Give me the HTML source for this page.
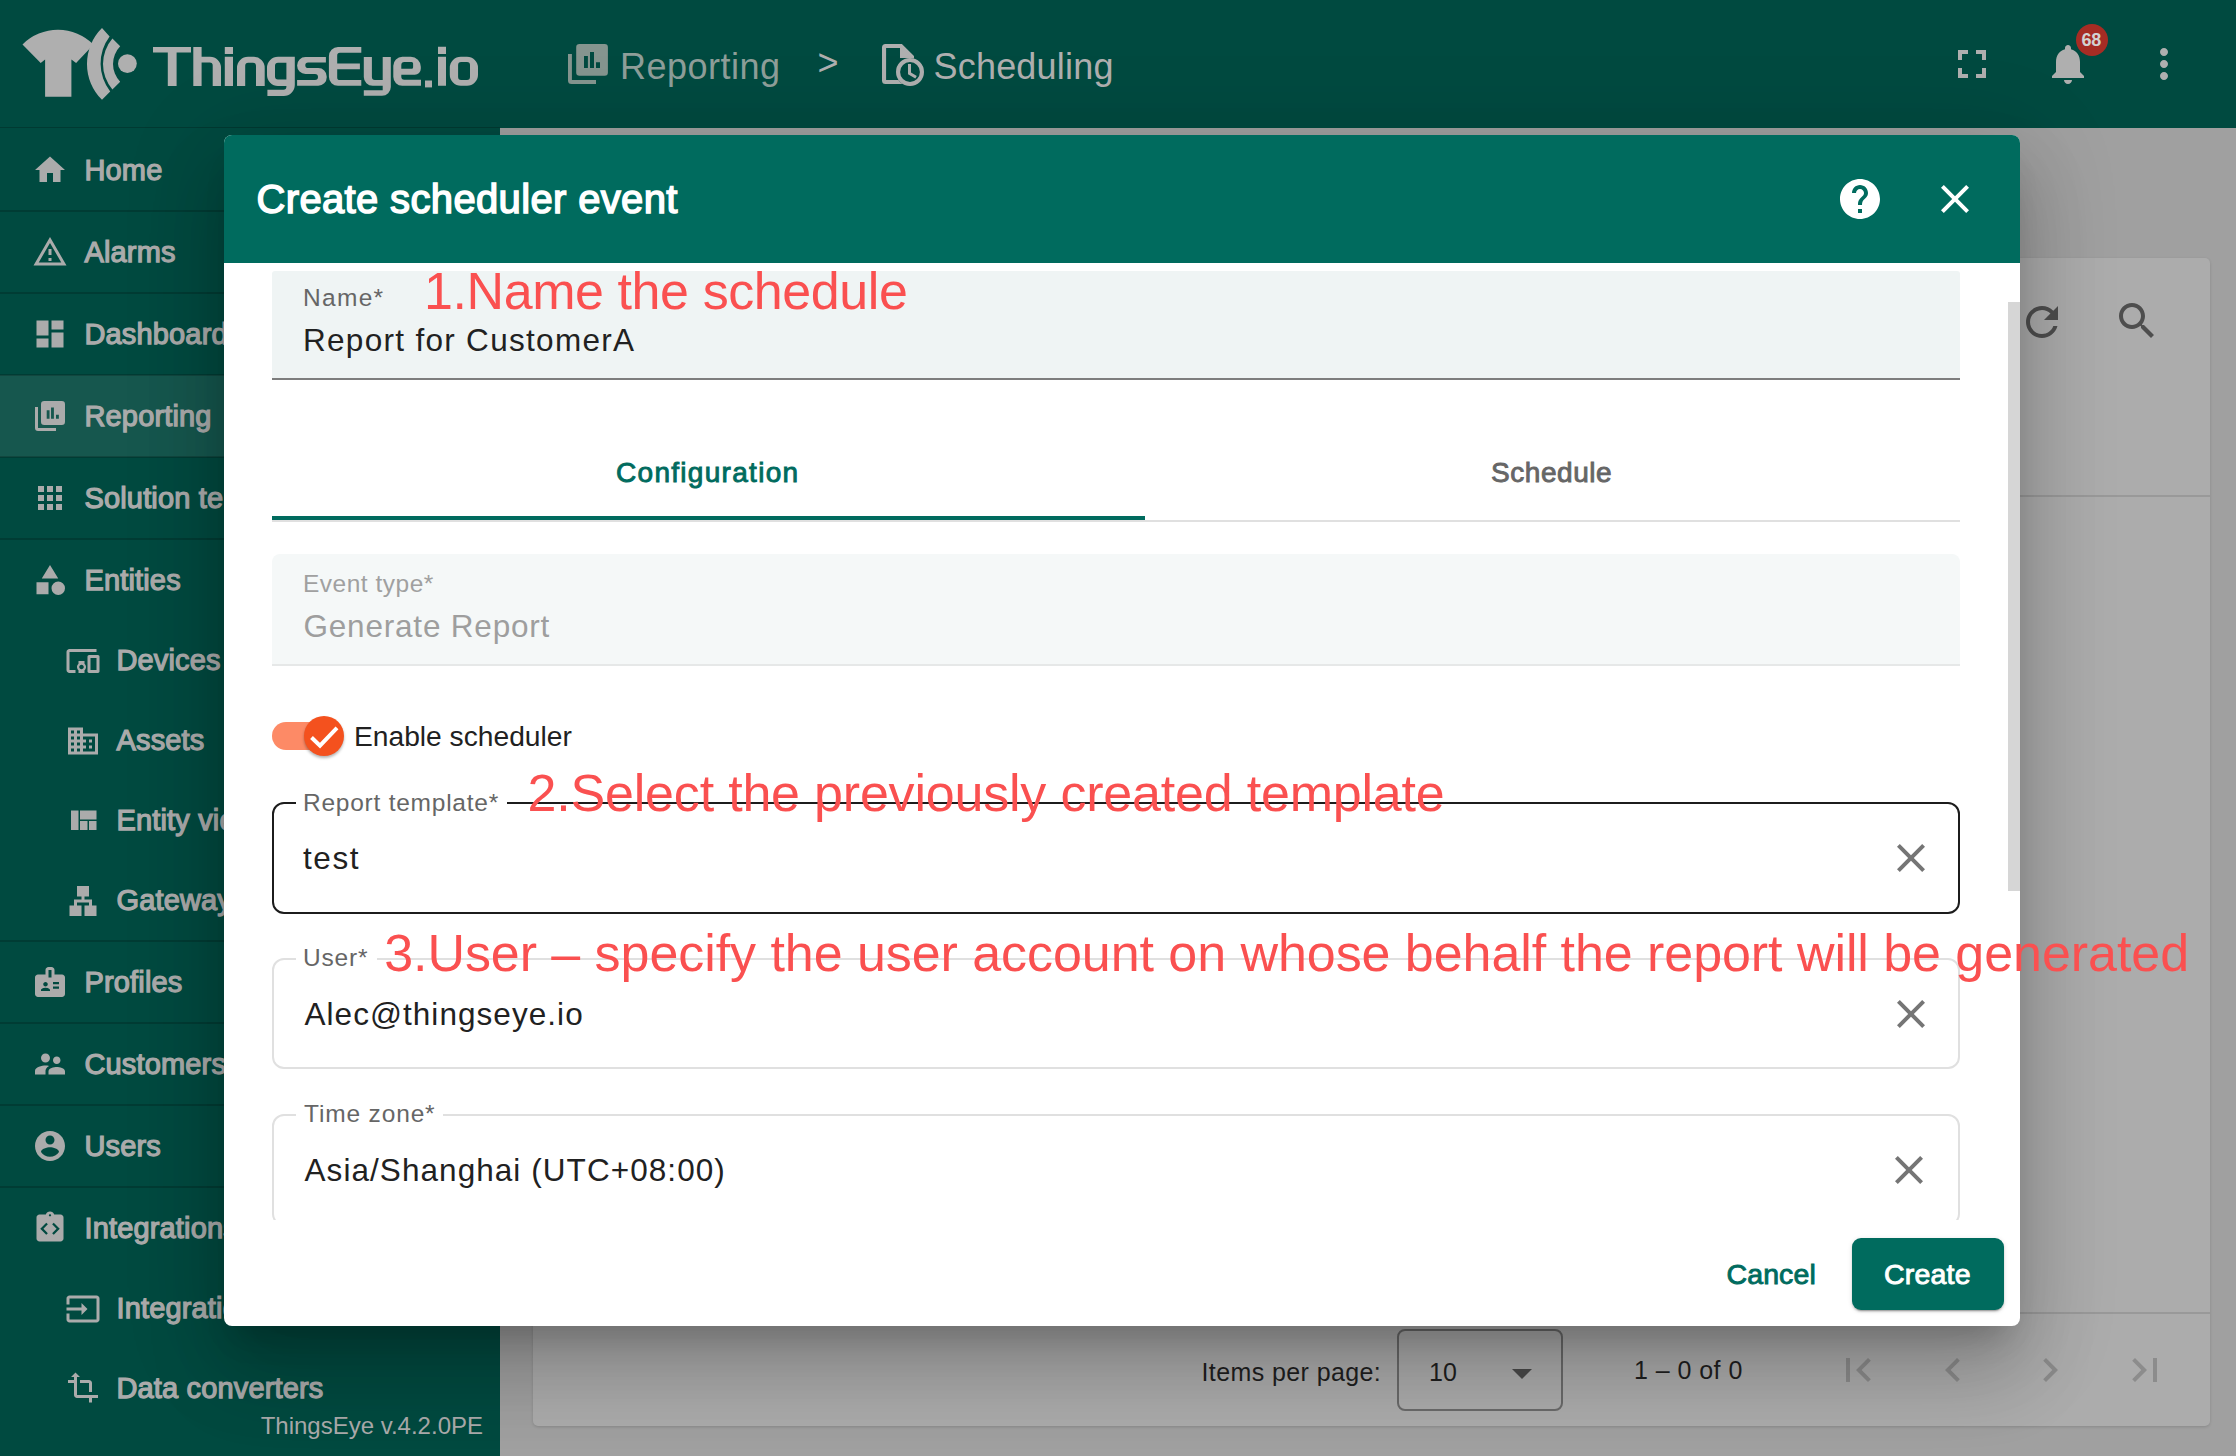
<!DOCTYPE html>
<html><head><meta charset="utf-8"><title>Create scheduler event</title>
<style>
html,body{margin:0;padding:0;}
body{width:2236px;height:1456px;overflow:hidden;position:relative;background:#a0a0a0;font-family:"Liberation Sans",sans-serif;}
.t{position:absolute;line-height:1;white-space:pre;font-family:"Liberation Sans",sans-serif;}
.abs{position:absolute;}
.m{-webkit-text-stroke:0.9px currentColor;}
.m2{-webkit-text-stroke:1.25px currentColor;}
.m3{-webkit-text-stroke:1.5px currentColor;}
</style></head><body>
<div class="abs" style="left:0;top:0;width:2236px;height:128px;background:#004a40;"></div>
<div class="abs" style="left:0;top:127px;width:500px;height:3px;background:#003a32;"></div>
<div class="abs" style="left:488px;top:130px;width:12px;height:5px;background:#66736f;"></div>
<svg class="abs" style="left:0;top:0" width="500" height="128" viewBox="0 0 500 128">
<g fill="#afafaf">
<path d="M22.5 44.4 A50.2 50.2 0 0 1 93.6 44.6 L76.1 62.9 L71.4 59.4 L71.4 96.7 L45.1 96.7 L45.1 59.4 L40.7 62.9 Z"/>
<path d="M102 28.1 A50.3 50.3 0 0 0 102 99.8 L110.2 91.4 A45.2 45.2 0 0 1 109.6 36.4 Z"/>
<path d="M112.4 38.5 A39.3 39.3 0 0 0 112.4 89.5 L120.2 81.7 A25.4 25.4 0 0 1 120.2 46.3 Z"/>
<circle cx="127.4" cy="63.6" r="9.4"/>
</g>
<g fill="#afafaf">
<path fill-rule="evenodd" d="M153 47h38v5.4h-14.4V86h-8.8V52.4H153z"/>
<path fill-rule="evenodd" d="M193.3 47h8.3v9.7h8.4a11 11 0 0 1 11 11V86h-8.3V65.5a3 3 0 0 0-3-3h-8.1V86h-8.3z"/>
<path fill-rule="evenodd" d="M224.8 47h8.2v7h-8.2z M224.8 56.7h8.2V86h-8.2z"/>
<path fill-rule="evenodd" d="M237 86V67.7a11 11 0 0 1 11-11h5.7a11 11 0 0 1 11 11V86h-8.7V65.7a3 3 0 0 0-3-3h-4.8a3 3 0 0 0-3 3V86z"/>
<path fill-rule="evenodd" d="M278 56.7h16.8V86v-0 0V84.9a11 11 0 0 1-11 11H267.4v-6.1h16a3 3 0 0 0 3-3V86h-8.4a11 11 0 0 1-11-11V67.7a11 11 0 0 1 11-11z M278 62.7a3 3 0 0 0-3 3v10.8a3 3 0 0 0 3 3h8.4V62.7z"/>
<path fill-rule="evenodd" d="M305.5 57H325.9V62.4H308.1a2.8 2.8 0 0 0-2.8 2.8a2.8 2.8 0 0 0 2.8 2.8H318.3a8.4 8.4 0 0 1 8.4 8.4v1a8.4 8.4 0 0 1-8.4 8.4H297.1V80H315a3 3 0 0 0 3-3a3 3 0 0 0-3-3H305.5a8.4 8.5 0 0 1-8.4-8.5a8.4 8.5 0 0 1 8.4-8.5z"/>
<path fill-rule="evenodd" d="M338 47.1h23.3v5.7h-21.4a2.7 2.7 0 0 0-2.7 2.7v8.1h22.7v5.7h-22.7v8.1a2.7 2.7 0 0 0 2.7 2.7h21.4v5.7H338a9.1 9.1 0 0 1-9.1-9.1V56.2a9.1 9.1 0 0 1 9.1-9.1z"/>
<path fill-rule="evenodd" d="M363.8 57h8.1v20.1a3 3 0 0 0 3 3h7.8V57h8.1v30a8.8 8.8 0 0 1-8.8 8.8h-18.2v-5.6h18.9v-4.4h-10a8.9 8.9 0 0 1-8.9-8.9z"/>
<path fill-rule="evenodd" d="M402.3 56.8h8.5a10 10 0 0 1 10 10v1.9a6 6 0 0 1-6 6h-13.5v2.1a3 3 0 0 0 3 3H421v6h-18.7a9 9 0 0 1-9-9V65.8a9 9 0 0 1 9-9z M404.3 62.1a3 3 0 0 0-3 3v3.7h10.3a1.5 1.5 0 0 0 1.5-1.5v-3.7a1.5 1.5 0 0 0-1.5-1.5z"/>
<path fill-rule="evenodd" d="M425 80.5h7v6.9h-7z"/>
<path fill-rule="evenodd" d="M438 46.7h8v7.2h-8z M438 56.8h8v29h-8z"/>
<path fill-rule="evenodd" d="M460.8 56.8h6.2a11 11 0 0 1 11 11v7a11 11 0 0 1-11 11h-6.2a11 11 0 0 1-11-11v-7a11 11 0 0 1 11-11z M461.1 62.1a3 3 0 0 0-3 3v11.9a3 3 0 0 0 3 3h5.9a3 3 0 0 0 3-3V65.1a3 3 0 0 0-3-3z"/>
</g></svg>
<svg class="abs" style="left:0;top:0" width="1200" height="128" viewBox="0 0 1200 128">
<g fill="#85958f">
<path fill-rule="evenodd" d="M579.5 43.9h25.1a3.3 3.3 0 0 1 3.3 3.3v25.3a3.3 3.3 0 0 1-3.3 3.3h-25.1a3.3 3.3 0 0 1-3.3-3.3V47.2a3.3 3.3 0 0 1 3.3-3.3z M584 56v11.9h3.9V56z M590 52v15.9h4V52z M596 62.2v5.7h4v-5.7z"/>
<path d="M568 53.9h3.9v26h24.1v4H571.5a3.5 3.5 0 0 1-3.5-3.5z"/>
</g>
<g fill="#afafaf">
<path fill-rule="evenodd" d="M885.5 43.9H901.9L914 56V83.9H885.5a3.5 3.5 0 0 1-3.5-3.5V47.4a3.5 3.5 0 0 1 3.5-3.5z M886.1 47.9V79.9H912V57.9H900V47.9z"/>
<circle cx="910" cy="72" r="14" fill="#004a40"/>
<path fill-rule="evenodd" d="M910 58a14 14 0 1 1 0 28a14 14 0 1 1 0-28z M910 62.1a9.9 9.9 0 1 0 0 19.8a9.9 9.9 0 1 0 0-19.8z M908 64h3v8.6l5.8 3.4-1.5 2.6-7.3-4.4z"/>
</g>
</svg>
<div class="t " style="left:620px;top:48.5px;font-size:36px;color:#8e9e99;font-weight:400;letter-spacing:0.5px;">Reporting</div>
<div class="t " style="left:817.5px;top:44.5px;font-size:36px;color:#afafaf;font-weight:400;letter-spacing:0px;">&gt;</div>
<div class="t " style="left:933.5px;top:48.5px;font-size:36px;color:#afafaf;font-weight:400;letter-spacing:0.2px;">Scheduling</div>
<svg style="position:absolute;left:1947.6px;top:39.7px;" width="48" height="48" viewBox="0 0 24 24"><path fill="#afafaf" d="M7 14H5v5h5v-2H7v-3zm-2-4h2V7h3V5H5v5zm12 7h-3v2h5v-5h-2v3zM14 5v2h3v3h2V5h-5z"/></svg>
<svg style="position:absolute;left:2043.8px;top:40px;" width="48" height="48" viewBox="0 0 24 24"><path fill="#afafaf" d="M12 22c1.1 0 2-.9 2-2h-4c0 1.1.89 2 2 2zm6-6v-5c0-3.07-1.64-5.64-4.5-6.32V4c0-.83-.67-1.5-1.5-1.5s-1.5.67-1.5 1.5v.68C7.63 5.36 6 7.92 6 11v5l-2 2v1h16v-1l-2-2z"/></svg>
<div class="abs" style="left:2076px;top:24px;width:32px;height:32px;border-radius:50%;background:#a62c24;"></div>
<div class="t " style="left:2081.5px;top:30.8px;font-size:18px;color:#d2d2d2;font-weight:700;letter-spacing:-0.3px;">68</div>
<svg style="position:absolute;left:2140.2px;top:39.8px;" width="48" height="48" viewBox="0 0 24 24"><path fill="#afafaf" d="M12 8c1.1 0 2-.9 2-2s-.9-2-2-2-2 .9-2 2 .9 2 2 2zm0 2c-1.1 0-2 .9-2 2s.9 2 2 2 2-.9 2-2-.9-2-2-2zm0 6c-1.1 0-2 .9-2 2s.9 2 2 2 2-.9 2-2-.9-2-2-2z"/></svg>
<div class="abs" style="left:0;top:128px;width:500px;height:1328px;background:#004a40;"></div>
<div class="abs" style="left:0;top:375px;width:500px;height:82px;background:#16574e;"></div>
<div class="abs" style="left:0;top:210px;width:500px;height:2px;background:rgba(0,0,0,0.18);"></div>
<div class="abs" style="left:0;top:292px;width:500px;height:2px;background:rgba(0,0,0,0.18);"></div>
<div class="abs" style="left:0;top:374px;width:500px;height:2px;background:rgba(0,0,0,0.18);"></div>
<div class="abs" style="left:0;top:456px;width:500px;height:2px;background:rgba(0,0,0,0.18);"></div>
<div class="abs" style="left:0;top:538px;width:500px;height:2px;background:rgba(0,0,0,0.18);"></div>
<div class="abs" style="left:0;top:940px;width:500px;height:2px;background:rgba(0,0,0,0.18);"></div>
<div class="abs" style="left:0;top:1022px;width:500px;height:2px;background:rgba(0,0,0,0.18);"></div>
<div class="abs" style="left:0;top:1104px;width:500px;height:2px;background:rgba(0,0,0,0.18);"></div>
<div class="abs" style="left:0;top:1186px;width:500px;height:2px;background:rgba(0,0,0,0.18);"></div>
<svg style="position:absolute;left:32px;top:152px;" width="36" height="36" viewBox="0 0 24 24"><path fill="#ababab" d="M10 20v-6h4v6h5v-8h3L12 3 2 12h3v8z"/></svg>
<div class="t m2" style="left:84.5px;top:155.5px;font-size:29px;color:#ababab;font-weight:400;letter-spacing:0.15px;">Home</div>
<svg style="position:absolute;left:32px;top:234px;" width="36" height="36" viewBox="0 0 24 24"><path fill="#ababab" d="M12 5.99L19.53 19H4.47L12 5.99M12 2L1 21h22L12 2zm1 14h-2v2h2v-2zm0-6h-2v4h2v-4z"/></svg>
<div class="t m2" style="left:84.5px;top:237.5px;font-size:29px;color:#ababab;font-weight:400;letter-spacing:0.15px;">Alarms</div>
<svg style="position:absolute;left:32px;top:316px;" width="36" height="36" viewBox="0 0 24 24"><path fill="#ababab" d="M3 13h8V3H3v10zm0 8h8v-6H3v6zm10 0h8V11h-8v10zm0-18v6h8V3h-8z"/></svg>
<div class="t m2" style="left:84.5px;top:319.5px;font-size:29px;color:#ababab;font-weight:400;letter-spacing:0.15px;">Dashboards</div>
<div class="t m2" style="left:84.5px;top:401.5px;font-size:29px;color:#ababab;font-weight:400;letter-spacing:0.15px;">Reporting</div>
<svg style="position:absolute;left:32px;top:480px;" width="36" height="36" viewBox="0 0 24 24"><path fill="#ababab" d="M4 8h4V4H4v4zm6 12h4v-4h-4v4zm-6 0h4v-4H4v4zm0-6h4v-4H4v4zm6 0h4v-4h-4v4zm6-10v4h4V4h-4zm-6 4h4V4h-4v4zm6 6h4v-4h-4v4zm0 6h4v-4h-4v4z"/></svg>
<div class="t m2" style="left:84.5px;top:483.5px;font-size:29px;color:#ababab;font-weight:400;letter-spacing:0.15px;">Solution templates</div>
<svg style="position:absolute;left:32px;top:562px;" width="36" height="36" viewBox="0 0 24 24"><path fill="#ababab" d="M12 2l-5.5 9h11z M17.5 13a4.5 4.5 0 1 0 0 9a4.5 4.5 0 1 0 0-9z M3 13.5h8v8H3z"/></svg>
<div class="t m2" style="left:84.5px;top:565.5px;font-size:29px;color:#ababab;font-weight:400;letter-spacing:0.15px;">Entities</div>
<svg style="position:absolute;left:32px;top:964px;" width="36" height="36" viewBox="0 0 24 24"><path fill="#ababab" d="M20 7h-5V4c0-1.1-.9-2-2-2h-2c-1.1 0-2 .9-2 2v3H4c-1.1 0-2 .9-2 2v11c0 1.1.9 2 2 2h16c1.1 0 2-.9 2-2V9c0-1.1-.9-2-2-2zM9 12c.83 0 1.5.67 1.5 1.5S9.83 15 9 15s-1.5-.67-1.5-1.5S8.17 12 9 12zm3 6H6v-.75c0-1 2-1.5 3-1.5s3 .5 3 1.5V18zm1-9h-2V4h2v5zm5 7.5h-4V15h4v1.5zm0-3h-4V12h4v1.5z"/></svg>
<div class="t m2" style="left:84.5px;top:967.5px;font-size:29px;color:#ababab;font-weight:400;letter-spacing:0.15px;">Profiles</div>
<svg style="position:absolute;left:32px;top:1046px;" width="36" height="36" viewBox="0 0 24 24"><path fill="#ababab" d="M16.5 12c1.38 0 2.49-1.12 2.49-2.5S17.88 7 16.5 7C15.12 7 14 8.12 14 9.5s1.12 2.5 2.5 2.5zM9 11c1.66 0 2.99-1.34 2.99-3S10.66 5 9 5C7.34 5 6 6.34 6 8s1.34 3 3 3zm7.5 3c-1.83 0-5.5.92-5.5 2.75V19h11v-2.25c0-1.83-3.67-2.75-5.5-2.75zM9 13c-2.33 0-7 1.17-7 3.5V19h7v-2.25c0-.85.33-2.34 2.37-3.47C10.5 13.1 9.66 13 9 13z"/></svg>
<div class="t m2" style="left:84.5px;top:1049.5px;font-size:29px;color:#ababab;font-weight:400;letter-spacing:0.15px;">Customers</div>
<svg style="position:absolute;left:32px;top:1128px;" width="36" height="36" viewBox="0 0 24 24"><path fill="#ababab" d="M12 2C6.48 2 2 6.48 2 12s4.48 10 10 10 10-4.48 10-10S17.52 2 12 2zm0 3c1.66 0 3 1.34 3 3s-1.34 3-3 3-3-1.34-3-3 1.34-3 3-3zm0 14.2c-2.5 0-4.71-1.28-6-3.22.03-1.99 4-3.08 6-3.08 1.99 0 5.97 1.09 6 3.08-1.29 1.94-3.5 3.22-6 3.22z"/></svg>
<div class="t m2" style="left:84.5px;top:1131.5px;font-size:29px;color:#ababab;font-weight:400;letter-spacing:0.15px;">Users</div>
<svg style="position:absolute;left:32px;top:1210px;" width="36" height="36" viewBox="0 0 24 24"><path fill="#ababab" d="M19 3h-4.18C14.4 1.84 13.3 1 12 1s-2.4.84-2.82 2H5c-1.1 0-2 .9-2 2v14c0 1.1.9 2 2 2h14c1.1 0 2-.9 2-2V5c0-1.1-.9-2-2-2zm-7-.25c.41 0 .75.34.75.75s-.34.75-.75.75-.75-.34-.75-.75.34-.75.75-.75zM9.5 16.5l-4-4 4-4 1.06 1.06L7.62 12.5l2.94 2.94L9.5 16.5zm5 0l-1.06-1.06 2.94-2.94-2.94-2.94L14.5 8.5l4 4-4 4z"/></svg>
<div class="t m2" style="left:84.5px;top:1213.5px;font-size:29px;color:#ababab;font-weight:400;letter-spacing:0.15px;">Integrations center</div>
<svg class="abs" style="left:32px;top:398px" width="36" height="36" viewBox="0 0 24 24"><g fill="#ababab">
<path fill-rule="evenodd" d="M8.2 2h11.6a2.2 2.2 0 0 1 2.2 2.2v11.6a2.2 2.2 0 0 1-2.2 2.2H8.2A2.2 2.2 0 0 1 6 15.8V4.2A2.2 2.2 0 0 1 8.2 2z M9.8 8.2v5.7h1.9V8.2z M12.7 6.3v7.6h1.9V6.3z M16 11.1v2.8h1.9v-2.8z"/>
<path d="M2 6h2v14h12v2H4a2 2 0 0 1-2-2z"/></g></svg>
<svg style="position:absolute;left:64.5px;top:643px;" width="36" height="36" viewBox="0 0 24 24"><path fill="#ababab" d="M3 6h18V4H3c-1.1 0-2 .9-2 2v12c0 1.1.9 2 2 2h4v-2H3V6zm10 6H9v1.78c-.61.55-1 1.33-1 2.22s.39 1.67 1 2.22V20h4v-1.78c.61-.55 1-1.34 1-2.22s-.39-1.67-1-2.22V12zm-2 5.5c-.83 0-1.5-.67-1.5-1.5s.67-1.5 1.5-1.5 1.5.67 1.5 1.5-.67 1.5-1.5 1.5zM22 8h-6c-.5 0-1 .5-1 1v10c0 .5.5 1 1 1h6c.5 0 1-.5 1-1V9c0-.5-.5-1-1-1zm-1 10h-4v-8h4v8z"/></svg>
<div class="t m2" style="left:116.5px;top:645.5px;font-size:29px;color:#ababab;font-weight:400;letter-spacing:0.15px;">Devices</div>
<svg style="position:absolute;left:64.5px;top:723px;" width="36" height="36" viewBox="0 0 24 24"><path fill="#ababab" d="M12 7V3H2v18h20V7H12zM6 19H4v-2h2v2zm0-4H4v-2h2v2zm0-4H4V9h2v2zm0-4H4V5h2v2zm4 12H8v-2h2v2zm0-4H8v-2h2v2zm0-4H8V9h2v2zm0-4H8V5h2v2zm10 12h-8v-2h2v-2h-2v-2h2v-2h-2V9h8v10zm-2-8h-2v2h2v-2zm0 4h-2v2h2v-2z"/></svg>
<div class="t m2" style="left:116.5px;top:725.5px;font-size:29px;color:#ababab;font-weight:400;letter-spacing:0.15px;">Assets</div>
<svg style="position:absolute;left:64.5px;top:803px;" width="36" height="36" viewBox="0 0 24 24"><path fill="#ababab" d="M10 18h5v-6h-5v6zm-6 0h5V5H4v13zm12 0h5v-6h-5v6zM10 5v6h11V5H10z"/></svg>
<div class="t m2" style="left:116.5px;top:805.5px;font-size:29px;color:#ababab;font-weight:400;letter-spacing:0.15px;">Entity views</div>
<svg style="position:absolute;left:64.5px;top:883px;" width="36" height="36" viewBox="0 0 24 24"><path fill="#ababab" d="M13 22h8v-7h-3v-4h-5V9h3V2H8v7h3v2H6v4H3v7h8v-7H8v-2h8v2h-3z"/></svg>
<div class="t m2" style="left:116.5px;top:885.5px;font-size:29px;color:#ababab;font-weight:400;letter-spacing:0.15px;">Gateways</div>
<svg style="position:absolute;left:64.5px;top:1291px;" width="36" height="36" viewBox="0 0 24 24"><path fill="#ababab" d="M21 3.01H3c-1.1 0-2 .9-2 2V9h2V4.99h18v14.03H3V15H1v4.01c0 1.1.9 1.98 2 1.98h18c1.1 0 2-.88 2-1.98v-14c0-1.11-.9-2-2-2zM11 16l4-4-4-4v3H1v2h10v3z"/></svg>
<div class="t m2" style="left:116.5px;top:1293.5px;font-size:29px;color:#ababab;font-weight:400;letter-spacing:0.15px;">Integrations</div>
<svg style="position:absolute;left:64.5px;top:1371px;" width="36" height="36" viewBox="0 0 24 24"><path fill="#ababab" d="M22 18v-2H8V4h2L7 1 4 4h2v2H2v2h4v8c0 1.1.9 2 2 2h8v3h2v-3h4zM10 8h6v6h2V8c0-1.1-.9-2-2-2h-6v2z"/></svg>
<div class="t m2" style="left:116.5px;top:1373.5px;font-size:29px;color:#ababab;font-weight:400;letter-spacing:0.15px;">Data converters</div>
<div class="t " style="right:17px;top:1413.7px;font-size:24px;color:#ababab;font-weight:400;letter-spacing:0px;right:1753px;left:auto;">ThingsEye v.4.2.0PE</div>
<div class="abs" style="left:533px;top:258px;width:1677px;height:1168px;background:#acacac;border-radius:5px;box-shadow:0 1px 3px rgba(0,0,0,0.15);"></div>
<div class="abs" style="left:533px;top:495px;width:1677px;height:2px;background:#999;"></div>
<div class="abs" style="left:533px;top:1312px;width:1677px;height:2px;background:#999;"></div>
<svg style="position:absolute;left:2018px;top:298px;" width="48" height="48" viewBox="0 0 24 24"><path fill="#4e4e4e" d="M17.65 6.35C16.2 4.9 14.21 4 12 4c-4.42 0-7.99 3.58-7.99 8s3.57 8 7.99 8c3.73 0 6.84-2.55 7.73-6h-2.08c-.82 2.33-3.04 4-5.65 4-3.31 0-6-2.69-6-6s2.69-6 6-6c1.66 0 3.14.69 4.22 1.78L13 11h7V4l-2.35 2.35z"/></svg>
<svg style="position:absolute;left:2113px;top:297px;" width="48" height="48" viewBox="0 0 24 24"><path fill="#4e4e4e" d="M15.5 14h-.79l-.28-.27C15.41 12.59 16 11.11 16 9.5 16 5.91 13.09 3 9.5 3S3 5.91 3 9.5 5.91 16 9.5 16c1.61 0 3.09-.59 4.23-1.57l.27.28v.79l5 4.99L20.49 19l-4.99-5zm-6 0C7.01 14 5 11.99 5 9.5S7.01 5 9.5 5 14 7.01 14 9.5 11.99 14 9.5 14z"/></svg>
<div class="t " style="left:1201.5px;top:1359.5px;font-size:25px;color:#1f1f1f;font-weight:400;letter-spacing:0.4px;">Items per page:</div>
<div class="abs" style="left:1397px;top:1329px;width:163px;height:79px;border:2px solid #6a6a6a;border-radius:8px;box-sizing:content-box;width:162px;height:78px;"></div>
<div class="t " style="left:1429px;top:1359.5px;font-size:25px;color:#1f1f1f;font-weight:400;letter-spacing:0px;">10</div>
<svg style="position:absolute;left:1498px;top:1349px;" width="48" height="48" viewBox="0 0 24 24"><path fill="#4a4a4a" d="M7 10l5 5 5-5z"/></svg>
<div class="t " style="left:1634px;top:1357.8px;font-size:25px;color:#1f1f1f;font-weight:400;letter-spacing:0.45px;">1 – 0 of 0</div>
<svg style="position:absolute;left:1834px;top:1346px;" width="48" height="48" viewBox="0 0 24 24"><path fill="#8c8c8c" d="M18.41 16.59L13.82 12l4.59-4.59L17 6l-6 6 6 6zM6 6h2v12H6z"/></svg>
<svg style="position:absolute;left:1929px;top:1346px;" width="48" height="48" viewBox="0 0 24 24"><path fill="#8c8c8c" d="M15.41 7.41L14 6l-6 6 6 6 1.41-1.41L10.83 12z"/></svg>
<svg style="position:absolute;left:2026px;top:1346px;" width="48" height="48" viewBox="0 0 24 24"><path fill="#8c8c8c" d="M10 6L8.59 7.41 13.17 12l-4.58 4.59L10 18l6-6z"/></svg>
<svg style="position:absolute;left:2121px;top:1346px;" width="48" height="48" viewBox="0 0 24 24"><path fill="#8c8c8c" d="M5.59 7.41L10.18 12l-4.59 4.59L7 18l6-6-6-6zM16 6h2v12h-2z"/></svg>
<div class="abs" style="left:224px;top:135px;width:1796px;height:1191px;background:#fff;border-radius:8px;overflow:hidden;box-shadow:0 22px 30px -14px rgba(0,0,0,.2),0 48px 76px 6px rgba(0,0,0,.14),0 18px 92px 16px rgba(0,0,0,.12);">
<div class="abs" style="left:0;top:0;width:1796px;height:128px;background:#006b5e;"></div>
</div>
<div class="t m3" style="left:256.5px;top:178.8px;font-size:40px;color:#ffffff;font-weight:400;letter-spacing:0.35px;">Create scheduler event</div>
<svg style="position:absolute;left:1835.5px;top:175px;" width="48" height="48" viewBox="0 0 24 24"><path fill="#ffffff" d="M12 2C6.48 2 2 6.48 2 12s4.48 10 10 10 10-4.48 10-10S17.52 2 12 2zm1 17h-2v-2h2v2zm2.07-7.75l-.9.92C13.45 12.9 13 13.5 13 15h-2v-.5c0-1.1.45-2.1 1.17-2.83l1.24-1.26c.37-.36.59-.86.59-1.41 0-1.1-.9-2-2-2s-2 .9-2 2H8c0-2.21 1.79-4 4-4s4 1.79 4 4c0 .88-.36 1.68-.93 2.25z"/></svg>
<svg style="position:absolute;left:1931px;top:175px;" width="48" height="48" viewBox="0 0 24 24"><path fill="#ffffff" d="M19 6.41L17.59 5 12 10.59 6.41 5 5 6.41 10.59 12 5 17.59 6.41 19 12 13.41 17.59 19 19 17.59 13.41 12z"/></svg>
<div class="abs" style="left:224px;top:263px;width:1796px;height:957px;overflow:hidden;">
<div class="abs" style="left:48px;top:8px;width:1688px;height:109px;background:#eff4f4;border-radius:3px 3px 0 0;"></div>
<div class="abs" style="left:48px;top:115px;width:1688px;height:2px;background:#7d7d7d;"></div>
<div class="abs" style="left:48px;top:257px;width:1688px;height:2px;background:#e0e0e0;"></div>
<div class="abs" style="left:48px;top:253px;width:873px;height:4px;background:#006b5e;"></div>
<div class="abs" style="left:48px;top:291px;width:1688px;height:112px;background:#f5f8f8;border-radius:8px 8px 0 0;"></div>
<div class="abs" style="left:48px;top:401px;width:1688px;height:2px;background:#e6e8e8;"></div>
<div class="abs" style="left:48px;top:459px;width:60px;height:28px;background:#fd8a66;border-radius:14px;"></div>
<div class="abs" style="left:80px;top:453px;width:40px;height:40px;background:#f4511e;border-radius:50%;box-shadow:0 2px 3px rgba(0,0,0,0.3);"></div>
<div class="abs" style="left:48px;top:539px;width:1688px;height:112px;border:2px solid #1c1c1c;border-radius:12px;box-sizing:border-box;"></div>
<div class="abs" style="left:72px;top:537px;width:211px;height:6px;background:#fff;"></div>
<div class="abs" style="left:48px;top:694.8px;width:1688px;height:111px;border:2px solid #e0e0e0;border-radius:12px;box-sizing:border-box;"></div>
<div class="abs" style="left:72px;top:692.8px;width:81px;height:6px;background:#fff;"></div>
<div class="abs" style="left:48px;top:850.8px;width:1688px;height:112px;border:2px solid #e0e0e0;border-radius:12px;box-sizing:border-box;"></div>
<div class="abs" style="left:72px;top:848.8px;width:147px;height:6px;background:#fff;"></div>
</div>
<div class="t " style="left:303px;top:286.3px;font-size:24.5px;color:#666666;font-weight:400;letter-spacing:1.3px;">Name*</div>
<div class="t " style="left:303px;top:324.8px;font-size:31.5px;color:#212121;font-weight:400;letter-spacing:1.3px;">Report for CustomerA</div>
<div class="t m" style="left:616px;top:459.3px;font-size:28px;color:#006b5e;font-weight:400;letter-spacing:1.3px;">Configuration</div>
<div class="t m" style="left:1491px;top:459.3px;font-size:28px;color:#666666;font-weight:400;letter-spacing:0.55px;">Schedule</div>
<div class="t " style="left:303px;top:572.3px;font-size:24.5px;color:#a0a0a0;font-weight:400;letter-spacing:0.5px;">Event type*</div>
<div class="t " style="left:303.5px;top:611.3px;font-size:31.5px;color:#9e9e9e;font-weight:400;letter-spacing:0.8px;">Generate Report</div>
<svg class="abs" style="left:304px;top:716px" width="40" height="40" viewBox="0 0 40 40"><path d="M7.5 21.5 L16 29.6 L33 11.8" fill="none" stroke="#fff" stroke-width="4"/></svg>
<div class="t " style="left:354px;top:721.7px;font-size:28.2px;color:#212121;font-weight:400;letter-spacing:0px;">Enable scheduler</div>
<div class="t " style="left:303px;top:790.8px;font-size:24.5px;color:#666666;font-weight:400;letter-spacing:0.76px;">Report template*</div>
<div class="t " style="left:303px;top:842.8px;font-size:31.5px;color:#212121;font-weight:400;letter-spacing:1.6px;">test</div>
<div class="t " style="left:303px;top:945.8px;font-size:24.5px;color:#666666;font-weight:400;letter-spacing:0.8px;">User*</div>
<div class="t " style="left:304.5px;top:998.8px;font-size:31.5px;color:#212121;font-weight:400;letter-spacing:1.05px;">Alec@thingseye.io</div>
<div class="t " style="left:304px;top:1102.3px;font-size:24.5px;color:#666666;font-weight:400;letter-spacing:0.85px;">Time zone*</div>
<div class="t " style="left:304.5px;top:1154.8px;font-size:31.5px;color:#212121;font-weight:400;letter-spacing:1.06px;">Asia/Shanghai (UTC+08:00)</div>
<svg style="position:absolute;left:1887.3px;top:834px;" width="48" height="48" viewBox="0 0 24 24"><path fill="#757575" d="M19 6.41L17.59 5 12 10.59 6.41 5 5 6.41 10.59 12 5 17.59 6.41 19 12 13.41 17.59 19 19 17.59 13.41 12z"/></svg>
<svg style="position:absolute;left:1887.3px;top:990px;" width="48" height="48" viewBox="0 0 24 24"><path fill="#757575" d="M19 6.41L17.59 5 12 10.59 6.41 5 5 6.41 10.59 12 5 17.59 6.41 19 12 13.41 17.59 19 19 17.59 13.41 12z"/></svg>
<svg style="position:absolute;left:1885px;top:1146px;" width="48" height="48" viewBox="0 0 24 24"><path fill="#757575" d="M19 6.41L17.59 5 12 10.59 6.41 5 5 6.41 10.59 12 5 17.59 6.41 19 12 13.41 17.59 19 19 17.59 13.41 12z"/></svg>
<div class="abs" style="left:2008px;top:302px;width:12px;height:589px;background:#d6d6d6;"></div>
<div class="t m" style="left:1726.5px;top:1259.9px;font-size:28.5px;color:#006b5e;font-weight:400;letter-spacing:0.1px;">Cancel</div>
<div class="abs" style="left:1852px;top:1238px;width:152px;height:72px;background:#006b5e;border-radius:9px;box-shadow:0 3px 1px -2px rgba(0,0,0,.2),0 2px 2px 0 rgba(0,0,0,.14),0 1px 5px 0 rgba(0,0,0,.12);"></div>
<div class="t m" style="left:1884px;top:1259.9px;font-size:28.5px;color:#ffffff;font-weight:400;letter-spacing:0.2px;">Create</div>
<div class="t " style="left:424px;top:265.0px;font-size:52px;color:#fa5050;font-weight:400;letter-spacing:-0.42px;">1.Name the schedule</div>
<div class="t " style="left:527.6px;top:767.2px;font-size:52px;color:#fa5050;font-weight:400;letter-spacing:-0.2px;">2.Select the previously created template</div>
<div class="t " style="left:384.2px;top:926.6px;font-size:52px;color:#fa5050;font-weight:400;letter-spacing:-0.06px;">3.User – specify the user account on whose behalf the report will be generated</div>
</body></html>
